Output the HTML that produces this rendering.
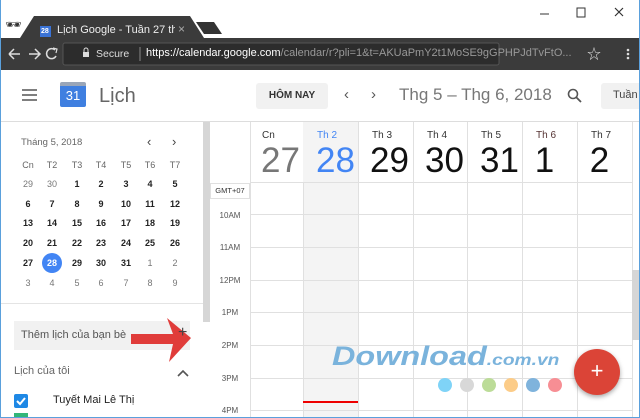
<!DOCTYPE html>
<html style="width:640px;height:418px;overflow:hidden"><head><meta charset="utf-8"><style>
*{margin:0;padding:0;box-sizing:border-box}
body{width:640px;height:418px;overflow:hidden;position:relative;background:#fff;font-family:"Liberation Sans","Noto Sans CJK SC",sans-serif}
.a{position:absolute}
.mc{position:absolute;width:20px;text-align:center;font-size:9px;font-weight:bold;color:#222}
.mc.g{color:#777;font-weight:normal}
.hd{position:absolute;font-size:9px;color:#666;width:20px;text-align:center}
.vl{position:absolute;top:122px;width:1px;height:296px;background:#e0e0e0}
.hl{position:absolute;left:250px;width:382px;height:1px;background:#e0e0e0}
.tl{position:absolute;left:212px;width:36px;text-align:center;font-size:8px;color:#555}
.dn{position:absolute;font-size:10px;color:#333;top:130px}
.dd{position:absolute;font-size:35px;color:#111;top:141px;width:55px;text-align:center}
.dot{position:absolute;top:378px;width:14px;height:14px;border-radius:50%}
</style></head><body>
<div class="a" style="left:0;top:0;width:640px;height:38px;background:#fff"></div>
<div class="a" style="left:5px;top:17px;font-size:13px;color:#333">🕶</div>
<svg class="a" style="left:0;top:0" width="640" height="70">
<path d="M20 38 L34 16 L190 16 L204 38 Z" fill="#3b3b3b"/>
<path d="M196 22 L214 22 L222 34 L204 34 Z" fill="#333"/>
<rect x="0" y="38" width="640" height="32" fill="#3b3b3b"/>
<rect x="63" y="43" width="436" height="22" rx="2" fill="#2c2c2c" stroke="#555"/>
<path d="M9 54 H20 M9 54 L14 49 M9 54 L14 59" stroke="#ddd" stroke-width="1.5" fill="none"/>
<path d="M40 54 H29 M35 49 L40 54 L35 59" stroke="#ddd" stroke-width="1.5" fill="none"/>
<path d="M55 50 A5 5 0 1 0 56 56" stroke="#ddd" stroke-width="1.5" fill="none"/><path d="M53 48 L57 49 L56 53" stroke="#ddd" stroke-width="1.2" fill="none"/>
<rect x="83" y="52" width="6" height="5" fill="#ddd"/><path d="M84 52 V50 A2 2 0 0 1 88 50 V52" stroke="#ddd" fill="none"/>
<line x1="140" y1="47" x2="140" y2="61" stroke="#888"/>
<path d="M540 14 H549" stroke="#333"/>
<rect x="577" y="8" width="8" height="9" stroke="#333" fill="none"/>
<path d="M615 8 L623 16 M623 8 L615 16" stroke="#333" stroke-width="1.2"/>
<circle cx="628" cy="50" r="1.3" fill="#ddd"/><circle cx="628" cy="54" r="1.3" fill="#ddd"/><circle cx="628" cy="58" r="1.3" fill="#ddd"/>
<rect x="40" y="26" width="11" height="11" fill="#3a73d6"/>
</svg>
<div class="a" style="left:41px;top:28px;font-size:7px;color:#fff;font-weight:bold">28</div>
<div class="a" style="left:57px;top:24px;width:118px;overflow:hidden;font-size:11px;color:#eee;white-space:nowrap">Lịch Google - Tuần 27 th<span style="color:#888">a</span></div>
<div class="a" style="left:178px;top:22px;font-size:12px;color:#aaa">×</div>
<div class="a" style="left:96px;top:48px;font-size:10.5px;color:#ddd">Secure</div>
<div class="a" style="left:146px;top:47px;font-size:11px;color:#fff;white-space:nowrap">https://calendar.google.com<span style="color:#999">/calendar/r?pli=1&amp;t=AKUaPmY2t1MoSE9gGPHPJdTvFtO...</span></div>
<div class="a" style="left:587px;top:44px;font-size:14px;color:#ddd">☆</div>
<div class="a" style="left:0;top:121px;width:640px;height:1px;background:#ddd"></div>
<svg class="a" style="left:22px;top:89px" width="16" height="12"><path d="M0 1H15M0 6H15M0 11H15" stroke="#555" stroke-width="1.6"/></svg>
<div class="a" style="left:60px;top:82px;width:26px;height:25px;background:#3f7fe0;border-radius:2px;border-top:4px solid #9aa6b8"></div>
<div class="a" style="left:60px;top:88px;width:26px;text-align:center;color:#fff;font-size:13px">31</div>
<div class="a" style="left:99px;top:85px;font-size:20px;color:#666">Lịch</div>
<div class="a" style="left:256px;top:83px;width:72px;height:26px;background:#f1f1f1;border-radius:3px;font-size:10px;font-weight:bold;color:#333;text-align:center;line-height:26px">HÔM NAY</div>
<div class="a" style="left:344px;top:86px;font-size:15px;color:#555">‹</div>
<div class="a" style="left:371px;top:86px;font-size:15px;color:#555">›</div>
<div class="a" style="left:399px;top:85px;font-size:17px;color:#777">Thg 5 – Thg 6, 2018</div>
<svg class="a" style="left:567px;top:88px" width="15" height="15"><circle cx="6" cy="6" r="4.5" stroke="#555" stroke-width="1.6" fill="none"/><path d="M9.5 9.5L14 14" stroke="#555" stroke-width="1.8"/></svg>
<div class="a" style="left:601px;top:83px;width:39px;height:26px;overflow:hidden;background:#f1f1f1;border-radius:3px 0 0 3px;font-size:11px;color:#444;padding:6px 0 0 12px">Tuần</div>
<div class="a" style="left:21px;top:137px;font-size:9.5px;color:#666">Tháng 5, 2018</div>
<div class="a" style="left:147px;top:134px;font-size:13px;color:#444">‹</div>
<div class="a" style="left:172px;top:134px;font-size:13px;color:#444">›</div>
<div class="hd" style="left:18px;top:160px">Cn</div><div class="hd" style="left:42px;top:160px">T2</div><div class="hd" style="left:67px;top:160px">T3</div><div class="hd" style="left:91px;top:160px">T4</div><div class="hd" style="left:116px;top:160px">T5</div><div class="hd" style="left:140px;top:160px">T6</div><div class="hd" style="left:165px;top:160px">T7</div>
<div class="a" style="left:42px;top:253px;width:20px;height:20px;border-radius:50%;background:#4285f4"></div>
<div id="mini"></div>
<div class="a" style="left:0;top:303px;width:203px;height:1px;background:#e4e4e4"></div>
<div class="a" style="left:203px;top:122px;width:7px;height:200px;background:#d6d6d6"></div>
<div class="a" style="left:14px;top:321px;width:176px;height:29px;background:#f1f1f1;font-size:11px;color:#555;padding:8px 0 0 7px">Thêm lịch của bạn bè</div>
<div class="a" style="left:14px;top:365px;font-size:11px;color:#666">Lịch của tôi</div>
<svg class="a" style="left:177px;top:369px" width="12" height="8"><path d="M1 7L6 2L11 7" stroke="#555" stroke-width="1.6" fill="none"/></svg>
<div class="a" style="left:14px;top:394px;width:14px;height:14px;background:#1e88e5;border-radius:2px"></div>
<svg class="a" style="left:14px;top:394px" width="14" height="14"><path d="M3 7L6 10L11 4" stroke="#fff" stroke-width="2" fill="none"/></svg>
<div class="a" style="left:14px;top:413px;width:14px;height:4px;background:#33b679"></div>
<div class="a" style="left:53px;top:394px;font-size:11px;color:#222">Tuyết Mai Lê Thị</div>
<svg class="a" style="left:125px;top:310px" width="70" height="60"><path d="M6 24 H48 L42 8 L66 28 L44 52 L48 34 H6 Z" fill="#e03c3a"/></svg>
<div class="a" style="left:178px;top:324px;font-size:16px;color:#444">+</div>
<div class="a" style="left:303px;top:122px;width:55px;height:296px;background:#f4f4f4"></div>
<div class="vl" style="left:250px"></div><div class="vl" style="left:303px;top:182px;height:236px"></div><div class="vl" style="left:358px"></div><div class="vl" style="left:413px"></div><div class="vl" style="left:467px"></div><div class="vl" style="left:522px"></div><div class="vl" style="left:577px"></div><div class="vl" style="left:632px"></div>
<div class="hl" style="top:182px"></div>
<div class="hl" style="top:214px"></div><div class="hl" style="top:247px"></div><div class="hl" style="top:280px"></div><div class="hl" style="top:312px"></div><div class="hl" style="top:345px"></div><div class="hl" style="top:378px"></div><div class="hl" style="top:410px"></div>
<div class="a" style="left:210px;top:183px;width:40px;height:16px;border:1px solid #e0e0e0;font-size:7.5px;color:#333;text-align:center;line-height:14px">GMT+07</div>
<div class="tl" style="top:211px">10AM</div><div class="tl" style="top:243px">11AM</div><div class="tl" style="top:276px">12PM</div><div class="tl" style="top:308px">1PM</div><div class="tl" style="top:341px">2PM</div><div class="tl" style="top:374px">3PM</div><div class="tl" style="top:406px">4PM</div>
<div class="a" style="left:303px;top:401px;width:55px;height:1.5px;background:#e00"></div>
<div class="a" style="left:632px;top:270px;width:8px;height:70px;background:#d6d6d6"></div>
<div class="dn" style="left:262px">Cn</div><div class="dd" style="left:253px;color:#777">27</div>
<div class="dn" style="left:317px;color:#4285f4">Th 2</div><div class="dd" style="left:308px;color:#4285f4">28</div>
<div class="dn" style="left:372px">Th 3</div><div class="dd" style="left:362px">29</div>
<div class="dn" style="left:427px">Th 4</div><div class="dd" style="left:417px">30</div>
<div class="dn" style="left:481px">Th 5</div><div class="dd" style="left:472px">31</div>
<div class="dn" style="left:536px;color:#533">Th 6</div><div class="dd" style="left:517px">1</div>
<div class="dn" style="left:591px">Th 7</div><div class="dd" style="left:572px">2</div>
<div class="a" style="left:332px;top:341px;font-size:27px;font-weight:bold;font-style:italic;color:#7ab3dc;white-space:nowrap;transform:scaleX(1.2);transform-origin:0 0">Download<span style="font-size:16px">.com.vn</span></div>
<div class="dot" style="left:438px;background:#7fd3f7"></div><div class="dot" style="left:460px;background:#d8d8d8"></div><div class="dot" style="left:482px;background:#bcdc98"></div><div class="dot" style="left:504px;background:#fccc88"></div><div class="dot" style="left:526px;background:#7fb3dc"></div><div class="dot" style="left:548px;background:#f78e94"></div>
<div class="a" style="left:574px;top:349px;width:46px;height:46px;border-radius:50%;background:#db4437;box-shadow:0 2px 5px rgba(0,0,0,.35);color:#fff;font-size:22px;text-align:center;line-height:44px">+</div>
<div class="a" style="left:0;top:0;width:640px;height:418px;border:1px solid #5aa0dc;border-top:none"></div>
<script>
var rows=[["29","30","1","2","3","4","5"],["6","7","8","9","10","11","12"],["13","14","15","16","17","18","19"],["20","21","22","23","24","25","26"],["27","28","29","30","31","1","2"],["3","4","5","6","7","8","9"]];
var xs=[18,42,67,91,116,140,165],ys=[179,199,218,238,258,278],h="";
rows.forEach(function(r,i){r.forEach(function(d,j){var g=(i==0&&j<2)||(i==4&&j>4)||i==5;var c=(i==4&&j==1)?' style="left:'+xs[j]+'px;top:'+ys[i]+'px;color:#fff"':' style="left:'+xs[j]+'px;top:'+ys[i]+'px"';h+='<div class="mc'+(g?' g':'')+'"'+c+'>'+d+'</div>';});});
document.getElementById("mini").innerHTML=h;
</script>
</body></html>
